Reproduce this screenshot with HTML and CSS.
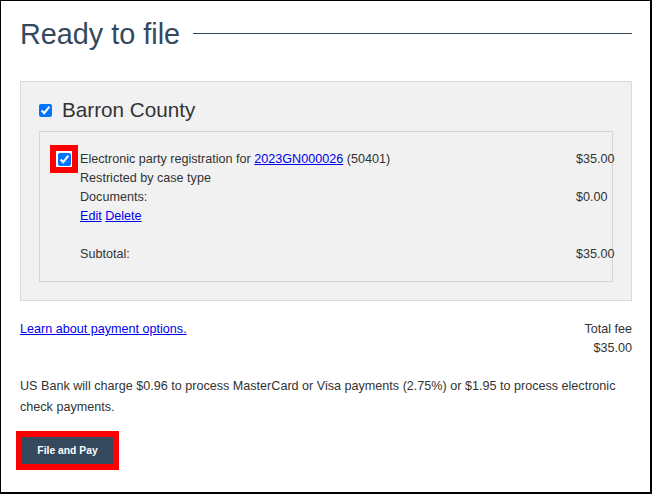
FILE: index.html
```html
<!DOCTYPE html>
<html lang="en">
<head>
<meta charset="utf-8">
<title>Ready to file</title>
<link rel="stylesheet" href="styles.css">
</head>
<body>
<div class="page">
  <div class="title-row">
    <h1 class="title">Ready to file</h1>
    <div class="title-rule"></div>
  </div>

  <div class="county">
    <div class="county-head">
      <input type="checkbox" class="cb" checked>
      <span class="county-name">Barron County</span>
    </div>
    <div class="item">
      <div class="item-check"><input type="checkbox" class="cb" checked></div>
      <div class="item-body">
        <div class="row"><span class="label">Electronic party registration for <a href="#">2023GN000026</a> (50401)</span><span class="price">$35.00</span></div>
        <div class="row"><span class="label">Restricted by case type</span></div>
        <div class="row"><span class="label">Documents:</span><span class="price">$0.00</span></div>
        <div class="row"><span class="label"><a href="#">Edit</a> <a href="#">Delete</a></span></div>
        <div class="row blank"></div>
        <div class="row"><span class="label">Subtotal:</span><span class="price">$35.00</span></div>
      </div>
    </div>
  </div>

  <div class="totals">
    <a href="#" class="learn">Learn about payment options.</a>
    <div class="total-fee">
      <div>Total fee</div>
      <div>$35.00</div>
    </div>
  </div>

  <p class="note">US Bank will charge $0.96 to process MasterCard or Visa payments (2.75%) or $1.95 to process electronic check payments.</p>

  <div class="pay-frame">
    <button class="pay-btn" type="button">File and Pay</button>
  </div>
</div>
</body>
</html>
```

FILE: styles.css
```css
html, body {
  margin: 0;
  padding: 0;
  background: #ffffff;
}

.page {
  box-sizing: border-box;
  width: 652px;
  height: 494px;
  border-style: solid;
  border-color: #000;
  border-width: 1px 2px 2px 1px;
  padding: 16px 18px 0 19px;
  font-family: "Liberation Sans", Arial, sans-serif;
  font-size: 12.6px;
  color: #333333;
  overflow: hidden;
}

a {
  color: #0000ee;
  text-decoration: underline;
}

.title-row {
  display: flex;
  align-items: flex-start;
  gap: 13px;
  height: 35px;
}

.title {
  margin: 0;
  font-weight: normal;
  font-size: 28.8px;
  line-height: 35px;
  color: #34495e;
  white-space: nowrap;
}

.title-rule {
  flex: 1;
  height: 1px;
  margin-top: 16px;
  background: #34495e;
}

.county {
  margin-top: 29px;
  background: #f1f1f1;
  border: 1px solid #d9d9d9;
  padding: 0 18px 18px 18px;
}

.county-head {
  display: flex;
  align-items: center;
  gap: 10px;
  padding-top: 16px;
  height: 24px;
  margin-bottom: 9px;
}

.cb {
  margin: 0;
  width: 13px;
  height: 13px;
  flex: none;
}

.county-name {
  font-size: 20.7px;
  line-height: 24px;
  color: #333333;
}

.item {
  display: flex;
  align-items: flex-start;
  gap: 2px;
  border: 1px solid #d6d6d6;
  padding: 13px 0 17px 10px;
}

.item-check {
  box-sizing: border-box;
  width: 28px;
  height: 28px;
  border: 6px solid #ff0000;
  background: #ffffff;
  display: flex;
  align-items: center;
  justify-content: center;
  flex: none;
}

.item-body {
  flex: 1;
  margin-top: 5px;
  margin-right: -2px;
}

.row {
  display: flex;
  height: 19px;
  line-height: 19px;
}

.label {
  flex: 1;
  white-space: nowrap;
}

.price {
  width: 38px;
  flex: none;
  white-space: nowrap;
}

.totals {
  display: flex;
  justify-content: space-between;
  align-items: flex-start;
  margin-top: 19px;
  line-height: 19px;
}

.total-fee {
  text-align: right;
}

.note {
  margin: 18px 0 0 0;
  line-height: 21px;
}

.pay-frame {
  display: inline-block;
  margin: 13px 0 0 -4px;
  border: 6px solid #ff0000;
}

.pay-btn {
  display: block;
  width: 91px;
  height: 27px;
  border: none;
  margin: 0;
  padding: 0;
  background: #34495e;
  color: #ffffff;
  font-family: "Liberation Sans", Arial, sans-serif;
  font-weight: bold;
  font-size: 10.35px;
  cursor: pointer;
}
```
